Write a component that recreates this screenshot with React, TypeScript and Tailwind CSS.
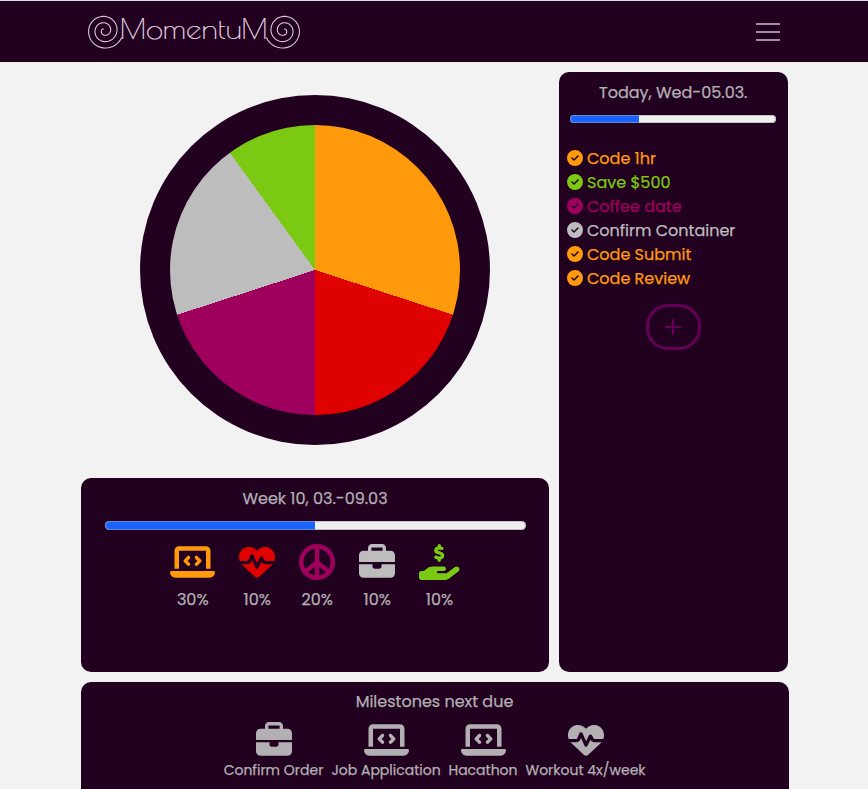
import React from "react";
import {
  FaBriefcase,
  FaCircleCheck,
  FaHandHoldingDollar,
  FaHeartPulse,
  FaLaptopCode,
  FaPeace,
} from "react-icons/fa6";

// Archimedean spiral wound inwards from its lower right end.
function spiral(cx: number, cy: number, mirror: boolean) {
  const points: string[] = [];
  for (let deg = 22; deg <= 980; deg += 8) {
    const r = 19 - (6.4 * deg) / 360;
    const a = (deg * Math.PI) / 180;
    const x = cx + (mirror ? -1 : 1) * r * Math.cos(a);
    points.push(`${x.toFixed(2)},${(cy + r * Math.sin(a)).toFixed(2)}`);
  }
  return points.join(" ");
}

function Logo() {
  return (
    <svg width="214" height="42" viewBox="87 9 214 42" fill="none" stroke="#d6c9d5" strokeWidth="1.1">
      <polyline points={spiral(104.4, 30.6, false)} />
      <polyline points={spiral(283.6, 30.6, true)} />
      <g fill="#e6dce5" stroke="#e6dce5" strokeWidth="0.15" fontFamily="'Poiret One', Lato, sans-serif" fontSize="27">
        <text x="120" y="39" textLength="26" lengthAdjust="spacingAndGlyphs">M</text>
        <text x="146" y="39" textLength="96" lengthAdjust="spacingAndGlyphs">omentu</text>
        <text x="241.5" y="39" textLength="26" lengthAdjust="spacingAndGlyphs">M</text>
      </g>
    </svg>
  );
}

function Progress({ value, className }: { value: number; className: string }) {
  return (
    <div className={`relative overflow-hidden rounded-full bg-[#efefef] ${className}`}>
      <div className="h-full bg-[#1863ff]" style={{ width: `${value}%` }} />
      <div className="absolute inset-0 rounded-full border border-[#a8a0a8]/60" />
    </div>
  );
}

const tasks = [
  { label: "Code 1hr", color: "text-[#ff9a0c]" },
  { label: "Save $500", color: "text-[#7bc912]" },
  { label: "Coffee date", color: "text-[#9f005d]" },
  { label: "Confirm Container", color: "text-[#bdbdbd]" },
  { label: "Code Submit", color: "text-[#ff9a0c]" },
  { label: "Code Review", color: "text-[#ff9a0c]" },
];

const goals = [
  { Icon: FaLaptopCode, share: "30%", color: "text-[#ff9a0c]", width: "w-[45px]" },
  { Icon: FaHeartPulse, share: "10%", color: "text-[#df0000]", width: "w-9" },
  { Icon: FaPeace, share: "20%", color: "text-[#9f005d]", width: "w-9" },
  { Icon: FaBriefcase, share: "10%", color: "text-[#bdbdbd]", width: "w-9" },
  { Icon: FaHandHoldingDollar, share: "10%", color: "text-[#7bc912]", width: "w-[40.5px]" },
];

const milestones = [
  { Icon: FaBriefcase, label: "Confirm Order", icon: "w-9", width: "w-[100px]" },
  { Icon: FaLaptopCode, label: "Job Application", icon: "w-[45px]", width: "w-[109px]" },
  { Icon: FaLaptopCode, label: "Hacathon", icon: "w-[45px]", width: "w-[69px]" },
  { Icon: FaHeartPulse, label: "Workout 4x/week", icon: "w-9", width: "w-[120px]" },
];

export default function App() {
  return (
    <div className="flex h-[789px] w-[868px] flex-col overflow-hidden bg-[#f2f2f2] font-['Poppins','Inter','Noto_Sans',sans-serif] text-base leading-6 text-[#b3b0b3] [-webkit-text-stroke:0.25px_currentColor]">
      <header className="flex h-[62px] shrink-0 items-start justify-between border-t border-[#dde0df] bg-[#220020] pr-[88px] pl-[87px]">
        <div className="pt-2 [-webkit-text-stroke:0]">
          <Logo />
        </div>
        <button className="flex w-6 flex-col gap-1.5 pt-[22px]" aria-label="Menu">
          <span className="h-0.5 w-full bg-[#a08fa0]" />
          <span className="h-0.5 w-full bg-[#a08fa0]" />
          <span className="h-0.5 w-full bg-[#a08fa0]" />
        </button>
      </header>

      <main className="ml-[81px] flex w-[708px] grow flex-col gap-2.5 pt-2.5">
        <div className="flex h-[600px] shrink-0 justify-between pr-px">
          <div className="flex w-[468px] flex-col justify-between">
            <div className="mt-[23px] ml-[59px] size-[350px] rounded-full bg-[#220020] p-[30px]">
              <div className="size-full rounded-full bg-[conic-gradient(#ff9a0c_0_30%,#df0000_30%_50%,#9f005d_50%_70%,#bdbdbd_70%_90%,#7bc912_90%_100%)]" />
            </div>
            <section className="flex h-[194px] flex-col items-center rounded-[10px] bg-[#220020] pt-[9px]">
              <h2>Week 10, 03.-09.03</h2>
              <Progress value={50} className="mt-[9.5px] h-[9px] w-[421px]" />
              <div className="mt-[14.5px] flex gap-6">
                {goals.map(({ Icon, share, color, width }, i) => (
                  <div key={i} className={`flex flex-col items-center ${width}`}>
                    <Icon className={`h-9 ${width} ${color}`} />
                    <span className="mt-[8px]">{share}</span>
                  </div>
                ))}
              </div>
            </section>
          </div>

          <aside className="flex w-[229.5px] flex-col items-center rounded-[10px] bg-[#220020] pt-[9px]">
            <h2>Today, Wed-05.03.</h2>
            <Progress value={33.3} className="mt-2.5 h-2 w-[206px]" />
            <ul className="mt-6 self-stretch pl-2">
              {tasks.map(({ label, color }) => (
                <li key={label} className={`flex h-6 items-center gap-[4.5px] ${color}`}>
                  <FaCircleCheck className="mb-0.5 size-4" />
                  <span>{label}</span>
                </li>
              ))}
            </ul>
            <button className="mt-[13px] flex h-[46px] w-[55px] items-center justify-center rounded-[22px] border-[3px] border-[#640058]" aria-label="Add">
              <svg width="16" height="16" viewBox="0 0 16 16" stroke="#640058" strokeWidth="2" strokeLinecap="round">
                <path d="M8 .8v14.4M.8 8h14.4" />
              </svg>
            </button>
          </aside>
        </div>

        <section className="flex grow flex-col items-center rounded-t-[10px] bg-[#220020] pt-2 pr-px">
          <h2>Milestones next due</h2>
          <div className="mt-[7.5px] flex gap-2 text-sm">
            {milestones.map(({ Icon, label, icon, width }, i) => (
              <div key={i} className={`flex flex-col items-center ${width}`}>
                <Icon className={`h-9 ${icon}`} />
                <span className="mt-[2.5px] leading-[21px] whitespace-nowrap">{label}</span>
              </div>
            ))}
          </div>
        </section>
      </main>
    </div>
  );
}
